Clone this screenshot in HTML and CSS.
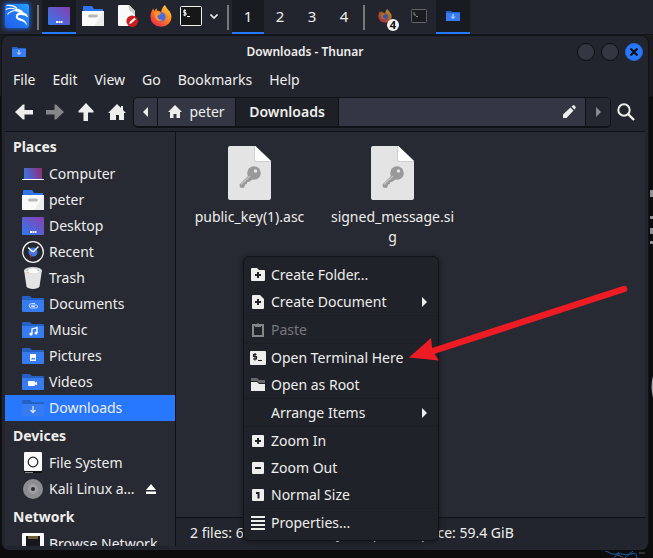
FILE: index.html
```html
<!DOCTYPE html>
<html lang="en">
<head>
<meta charset="utf-8">
<title>Downloads - Thunar</title>
<link rel="stylesheet" href="styles.css">
</head>
<body>
<svg class="defs" width="0" height="0" aria-hidden="true">
  <defs>
    <linearGradient id="g-screen" x1="0" y1="1" x2="1" y2="0"><stop offset="0" stop-color="#2e7bf0"/><stop offset="1" stop-color="#8a3fae"/></linearGradient>
    <linearGradient id="g-laptop" x1="0" y1="0.6" x2="1" y2="0.4"><stop offset="0" stop-color="#3b74e0"/><stop offset="1" stop-color="#8d2f7c"/></linearGradient>
    <linearGradient id="g-kali" x1="0" y1="1" x2="1" y2="0"><stop offset="0" stop-color="#1f5fe6"/><stop offset="0.5" stop-color="#2277f5"/><stop offset="1" stop-color="#2aa0ff"/></linearGradient>
    <linearGradient id="g-fox" x1="1" y1="0" x2="0.2" y2="1"><stop offset="0" stop-color="#ffe14a"/><stop offset="0.45" stop-color="#ff8a1f"/><stop offset="1" stop-color="#f0264f"/></linearGradient>
    <symbol id="folder" viewBox="0 0 22 16">
      <path d="M1 0h7l2 2h11a1 1 0 0 1 1 1v5H0V1a1 1 0 0 1 1-1z" fill="#2560c4"/>
      <path d="M0 4h22v11a1 1 0 0 1-1 1H1a1 1 0 0 1-1-1z" fill="#367bf0"/>
    </symbol>
    <symbol id="home-folder" viewBox="0 0 22 20">
      <path d="M1 1a1 1 0 0 1 1-1h8l2 3h9v4H1z" fill="#2f74ee"/>
      <path d="M0 5h22v15H0z" fill="#fafafa"/>
      <path d="M22 5v15H12z" fill="#ececec"/>
      <rect x="6" y="8.500" width="10" height="3" rx="1.500" fill="#b9b9b9"/>
    </symbol>
    <symbol id="desktop" viewBox="0 0 22 18">
      <rect width="22" height="18" rx="1" fill="url(#g-screen)"/>
      <path d="M8 14h2v2H8zM10.500 14h2v2h-2zM13 14h1.500v2H13z" fill="#fff"/>
    </symbol>
    <symbol id="firefox" viewBox="0 0 22 22">
      <path d="M15 0c1 1.500 1.500 3 3 4.500 2.500 2.500 3.500 5 3.500 7.500A10.500 9.800 0 0 1 .5 12C.5 8.500 1.500 6 3.200 3.500L4.500 6l2-3 .6 2.600c1.500.1 2.800.6 3.900 1.400.6-3 2-5.500 4-7z" fill="url(#g-fox)"/>
      <circle cx="11" cy="12" r="4.700" fill="#4a6be0"/>
      <path d="M4 7.500c3-1.500 5-.5 7 .5-.5 2-2.500 2-3.500 2.500-.5 3 2 5 5 4-2 3-7 1.500-7.500-2.500-.2-2-1.500-2.500-1-4.500z" fill="#ff9328"/>
    </symbol>
    <symbol id="key-file" viewBox="0 0 43 54">
      <path d="M2 0h25.500L43 15v37a2 2 0 0 1-2 2H2a2 2 0 0 1-2-2V2a2 2 0 0 1 2-2z" fill="#e4e4e4"/>
      <path d="M27 0v13a2 2 0 0 0 2 2h14v1H28.500A2.500 2.500 0 0 1 26 13.500V0z" fill="#cfcfcf"/>
      <path d="M27 0l16 15H29a2 2 0 0 1-2-2z" fill="#fff"/>
      <circle cx="26" cy="27" r="6.800" fill="#999"/>
      <path d="M21 29l-9.500 9.500.5 3 3.500.5 1.500-2-.3-1.500 2-.3.500-2 2-.5L25 33z" fill="#999"/>
      <path d="M13 38.500l9-8.500" stroke="#c4c4c4" stroke-width="1.200"/>
      <circle cx="27.500" cy="25" r="1.700" fill="#e4e4e4"/>
    </symbol>
    <symbol id="house" viewBox="0 0 18 16">
      <path d="M9 0l4 4V2h2v4l3 3h-2v7h-5v-5H8v5H2V9H0z" fill="#eeeeec"/>
    </symbol>
  </defs>
</svg>

<div class="desktop">
  <nav class="panel" aria-label="Panel">
    <button class="launcher kali" aria-label="Applications"><svg width="24" height="24" viewBox="0 0 24 24">
      <rect width="24" height="24" rx="1" fill="url(#g-kali)"/>
      <path d="M1.500 1.500c4-.500 8 .500 10.500 3M.800 5.500C5 3.500 9 4 12.500 6.500M2.500 10.500c2-2.800 5-4 9-4" fill="none" stroke="#fff" stroke-width="1.200"/>
      <path d="M11 4.500c4 .500 6.500 2 7.500 4l3 1.500 2 3.500-4-2c-3-.700-6-.800-6.500.700-.300 1.700 2.200 2 4.700 3 3 1.300 4.300 3.500 4.300 6.800-1.300-3-3-4.300-5.500-5-3-.800-5.700-1.500-5.700-4.500 0-2 1.200-3.200 3.200-4-1-.700-2-1-3.500-1.200z" fill="#fff"/>
    </svg></button>
    <i class="divider"></i>
    <button class="launcher active" aria-label="Show desktop"><svg width="22" height="18"><use href="#desktop"/></svg></button>
    <button class="launcher" aria-label="Files"><svg width="22" height="20"><use href="#home-folder"/></svg></button>
    <button class="launcher" aria-label="Text editor"><svg width="22" height="22" viewBox="0 0 22 22">
      <path d="M3 0h10l6 6v15H3a1 1 0 0 1-1-1V1a1 1 0 0 1 1-1z" fill="#fafafa"/><path d="M13 0l6 6v4l-6-5z" fill="#cfcfcf"/>
      <circle cx="16.200" cy="16.200" r="5.800" fill="#d01c1c"/><path d="M13.200 19.200l.7-2.500 4.500-4 1.500 1.500-4.500 4z" fill="#fff"/>
    </svg></button>
    <button class="launcher" aria-label="Firefox"><svg width="22" height="22"><use href="#firefox"/></svg></button>
    <button class="launcher narrow" aria-label="Terminal"><svg width="22" height="20" viewBox="0 0 22 20">
      <rect x=".500" y=".500" width="21" height="19" rx="1" fill="#171717" stroke="#f2f2f2"/>
      <path d="M6 4.500H3.800v2.200H6V9H3.300M4.800 3.200v7M7 10.500h3" fill="none" stroke="#fff"/>
    </svg></button>
    <button class="launcher arrow" aria-label="More terminals"><svg width="8" height="5" viewBox="0 0 8 5"><path d="M.500.500L4 4 7.500.500" fill="none" stroke="#eee" stroke-width="1.600"/></svg></button>
    <i class="divider"></i>
    <button class="workspace active">1</button>
    <button class="workspace">2</button>
    <button class="workspace">3</button>
    <button class="workspace">4</button>
    <i class="divider"></i>
    <button class="launcher task" aria-label="Firefox windows"><svg class="dim" width="14" height="14" viewBox="0 0 22 22"><use href="#firefox"/></svg><span class="count">4</span></button>
    <button class="launcher task" aria-label="Terminal window"><svg width="16" height="14" viewBox="0 0 16 14"><rect x=".500" y=".500" width="15" height="13" rx="1" fill="#1b1c20" stroke="#636468"/><path d="M3 3v3h2M5 7.500h2" fill="none" stroke="#8b8b8e"/></svg></button>
    <button class="launcher task active" aria-label="Downloads window"><svg width="14" height="10" viewBox="0 0 14 10"><path d="M0 0h5l1 1h8v9H0z" fill="#2560c4"/><path d="M0 2h14v8H0z" fill="#367bf0"/><path d="M7 3v4M5 5.500L7 7.500l2-2" fill="none" stroke="#dce8ff"/></svg></button>
  </nav>

  <div class="window">
    <header class="titlebar">
      <svg class="app" width="14" height="10" viewBox="0 0 14 10"><path d="M0 0h5l1 1h8v9H0z" fill="#2560c4"/><path d="M0 2h14v8H0z" fill="#367bf0"/><path d="M7 3v4M5 5.500L7 7.500l2-2" fill="none" stroke="#dce8ff"/></svg>
      <h1>Downloads - Thunar</h1>
      <div class="controls">
        <button aria-label="Minimize"></button>
        <button aria-label="Maximize"></button>
        <button class="close" aria-label="Close"><svg width="8" height="8" viewBox="0 0 8 8"><path d="M.500.500l7 7M7.500.500l-7 7" stroke="#111" stroke-width="2.200"/></svg></button>
      </div>
    </header>
    <nav class="menubar" aria-label="Menu bar">
      <button>File</button><button>Edit</button><button>View</button><button>Go</button><button>Bookmarks</button><button>Help</button>
    </nav>
    <div class="toolbar">
      <button class="tool" aria-label="Back"><svg width="18" height="16" viewBox="0 0 18 16"><path d="M0 8l8-7.500h1.500V6H18v4.500H9.500v5H8z" fill="#eeeeec"/></svg></button>
      <button class="tool" aria-label="Forward"><svg width="18" height="16" viewBox="0 0 18 16"><path d="M18 8l-8-7.500H8.500V6H0v4.500h8.500v5H10z" fill="#858688"/></svg></button>
      <button class="tool" aria-label="Up"><svg width="16" height="18" viewBox="0 0 16 18"><path d="M8 0l7.500 8v1.500H10V18H5.500V9.500H.500V8z" fill="#eeeeec"/></svg></button>
      <button class="tool" aria-label="Home"><svg width="18" height="16"><use href="#house"/></svg></button>
      <div class="pathbar">
        <button class="step" aria-label="Scroll path left"><svg width="5" height="10" viewBox="0 0 5 10"><path d="M5 0v10L0 5z" fill="#eeeeec"/></svg></button>
        <button class="crumb"><svg width="14" height="13" viewBox="0 0 14 13"><path d="M7 0l7 7h-2v6H8.500V9h-3v4H2V7H0z" fill="#eeeeec"/></svg>peter</button>
        <button class="crumb current">Downloads</button>
        <button class="edit" aria-label="Edit path"><svg width="13" height="13" viewBox="0 0 13 13"><path d="M0 13v-3.500L7.500 2.500l3 3L3.500 13zM8.500 1.500L10 .300h1.200L12.700 2v1L11.500 4.500z" fill="#eeeeec"/></svg></button>
        <button class="step off" aria-label="Scroll path right"><svg width="5" height="10" viewBox="0 0 5 10"><path d="M0 0v10l5-5z" fill="#8b8c90"/></svg></button>
      </div>
      <button class="search" aria-label="Search"><svg width="18" height="18" viewBox="0 0 18 18"><circle cx="7" cy="7" r="5.700" fill="none" stroke="#eeeeec" stroke-width="2"/><path d="M11 11l6 6" stroke="#eeeeec" stroke-width="2.400"/></svg></button>
    </div>

    <div class="content">
      <aside class="sidebar">
        <h2>Places</h2>
        <a href="#"><span class="ico"><svg width="22" height="12" viewBox="0 0 22 12"><rect x="2" width="18" height="11" fill="url(#g-laptop)"/><path d="M0 11h22v1H0z" fill="#fff"/></svg></span>Computer</a>
        <a href="#"><span class="ico"><svg width="22" height="20"><use href="#home-folder"/></svg></span>peter</a>
        <a href="#"><span class="ico"><svg width="22" height="18"><use href="#desktop"/></svg></span>Desktop</a>
        <a href="#"><span class="ico"><svg width="22" height="22" viewBox="0 0 22 22"><circle cx="11" cy="11" r="10.300" fill="#25272f" stroke="#f2f2f2" stroke-width="1.300"/><circle cx="11" cy="11" r="4.500" fill="#367bf0"/><path d="M6 6.500l5 4.500 5.500-5.500" fill="none" stroke="#fff" stroke-width="1.400"/><path d="M11 11l-3 6" stroke="#d0243a"/></svg></span>Recent</a>
        <a href="#"><span class="ico"><svg width="18" height="22" viewBox="0 0 18 22"><path d="M0 3h18l-2.500 16.500C15 21 12 22 9 22s-6-1-6.500-2.500z" fill="#e4e4e4"/><ellipse cx="9" cy="3.500" rx="9" ry="3.500" fill="#d4d4d4"/><ellipse cx="9" cy="4" rx="7.500" ry="2.500" fill="#fbfbfb"/><path d="M2.500 3.500l2-.8M13.500 3l2 .8" stroke="#5abfa5"/><path d="M3 5l2 .5" stroke="#e6c34a"/></svg></span>Trash</a>
        <a href="#"><span class="ico"><svg width="22" height="16"><use href="#folder"/><path d="M13 7.500H9.500a2 2 0 0 0 0 4.500h4a1.500 1.500 0 0 0 1-3l-5 .3c-.8.200-.6 1.200 0 1.200H13" fill="none" stroke="#c8dcff"/></svg></span>Documents</a>
        <a href="#"><span class="ico"><svg width="22" height="16"><use href="#folder"/><path d="M10 12V7l5-1.500V11" fill="none" stroke="#fff" stroke-width="1.300"/><circle cx="9" cy="12" r="1.600" fill="#fff"/><circle cx="14" cy="11" r="1.500" fill="#fff"/></svg></span>Music</a>
        <a href="#"><span class="ico"><svg width="22" height="16"><use href="#folder"/><rect x="8" y="6" width="6" height="7" fill="#fff"/><path d="M8.800 11.500l1.700-2 1 1 1-1 1 2z" fill="#367bf0"/></svg></span>Pictures</a>
        <a href="#"><span class="ico"><svg width="22" height="16"><use href="#folder"/><rect x="6" y="7" width="7" height="5" rx="1" fill="#fff"/><path d="M12 9.500l3-2v4z" fill="#fff"/></svg></span>Videos</a>
        <a href="#" class="selected" aria-current="page"><span class="ico"><svg width="22" height="16"><use href="#folder"/><path d="M11 6v6M8.500 10l2.500 2.500 2.500-2.500" fill="none" stroke="#d5e4ff" stroke-width="1.300"/></svg></span>Downloads</a>
        <h2>Devices</h2>
        <a href="#"><span class="ico"><svg width="18" height="22" viewBox="0 0 18 22"><rect y="17" width="18" height="4" rx="1" fill="#111"/><rect width="18" height="19" rx="1" fill="#fafafa"/><circle cx="9" cy="10" r="4.800" fill="none" stroke="#222" stroke-width="1.200"/><path d="M1 20.500h8" stroke="#888"/></svg></span>File System</a>
        <a href="#"><span class="ico"><svg width="20" height="20" viewBox="0 0 20 20"><circle cx="10" cy="10" r="10" fill="#8d8d91"/><circle cx="10" cy="10" r="5" fill="#a0a0a4"/><circle cx="10" cy="10" r="2" fill="#2a2c36"/></svg></span><span class="name">Kali Linux a…</span><svg class="eject" width="10" height="10" viewBox="0 0 10 10"><path d="M5 0l5 6H0zM0 7.500h10V10H0z" fill="#fff"/></svg></a>
        <h2>Network</h2>
        <a href="#"><span class="ico"><svg width="22" height="22" viewBox="0 0 22 22"><rect width="22" height="22" rx="1" fill="#fafafa"/><path d="M4 3h14v16H4z" fill="#16171c"/><path d="M7 3v3M9 3v3M11 3v3M13 3v3M15 3v3" stroke="#c3a54f"/></svg></span>Browse Network</a>
      </aside>

      <main class="pane">
        <div class="files">
          <figure><svg width="43" height="54"><use href="#key-file"/></svg><figcaption>public_key(1).asc</figcaption></figure>
          <figure><svg width="43" height="54"><use href="#key-file"/></svg><figcaption>signed_message.sig</figcaption></figure>
        </div>
        <footer class="status">2 files: 6.0 KiB (6,141 bytes) | Free space: 59.4 GiB</footer>
      </main>
    </div>
  </div>

  <div class="context" role="menu">
    <button role="menuitem"><span class="mico"><svg width="14" height="13" viewBox="0 0 14 13"><path d="M0 1a1 1 0 0 1 1-1h5l2 2h5a1 1 0 0 1 1 1v9a1 1 0 0 1-1 1H1a1 1 0 0 1-1-1z" fill="#eeeeec"/><path d="M7 4v6M4 7h6" stroke="#20222a" stroke-width="2"/></svg></span>Create Folder...</button>
    <button role="menuitem"><span class="mico"><svg width="12" height="14" viewBox="0 0 12 14"><path d="M0 1a1 1 0 0 1 1-1h7l4 4v9a1 1 0 0 1-1 1H1a1 1 0 0 1-1-1z" fill="#eeeeec"/><path d="M6 4v6M3 7h6" stroke="#20222a" stroke-width="2"/></svg></span>Create Document<svg class="sub" width="5" height="10" viewBox="0 0 5 10"><path d="M0 0v10l5-5z" fill="#eeeeec"/></svg></button>
    <hr>
    <button role="menuitem" disabled><span class="mico"><svg width="12" height="14" viewBox="0 0 12 14"><path d="M1 2h10v11H1z" fill="none" stroke="#858689" stroke-width="2"/><path d="M3 1h2l1-1 1 1h2v3H3z" fill="#858689"/></svg></span>Paste</button>
    <hr>
    <button role="menuitem"><span class="mico"><svg width="16" height="14" viewBox="0 0 16 14"><rect width="16" height="14" rx="1" fill="#eeeeec"/><path d="M6.500 3.500H3.500v2h3v2.500H3M5 2v7.500M8 9.500h4" fill="none" stroke="#20222a" stroke-width="1.200"/></svg></span>Open Terminal Here</button>
    <button role="menuitem"><span class="mico"><svg width="14" height="13" viewBox="0 0 14 13"><path d="M0 0h6l2 2h6v3H8L6 3H0z" fill="#66676b"/><path d="M0 4h6l2 2h6v7H0z" fill="#eeeeec"/></svg></span>Open as Root</button>
    <hr>
    <button role="menuitem"><span class="mico"></span>Arrange Items<svg class="sub" width="5" height="10" viewBox="0 0 5 10"><path d="M0 0v10l5-5z" fill="#eeeeec"/></svg></button>
    <hr>
    <button role="menuitem"><span class="mico"><svg width="12" height="12" viewBox="0 0 12 12"><rect width="12" height="12" rx="1" fill="#eeeeec"/><path d="M6 3v6M3 6h6" stroke="#20222a" stroke-width="2"/></svg></span>Zoom In</button>
    <button role="menuitem"><span class="mico"><svg width="12" height="12" viewBox="0 0 12 12"><rect width="12" height="12" rx="1" fill="#eeeeec"/><path d="M3 6h6" stroke="#20222a" stroke-width="2"/></svg></span>Zoom Out</button>
    <button role="menuitem"><span class="mico"><svg width="12" height="12" viewBox="0 0 12 12"><rect width="12" height="12" rx="1" fill="#eeeeec"/><path d="M4 4h2.500v5.500" fill="none" stroke="#20222a" stroke-width="2"/></svg></span>Normal Size</button>
    <hr>
    <button role="menuitem"><span class="mico"><svg width="14" height="14" viewBox="0 0 14 14"><path d="M0 1h14M0 5h14M0 9h14M0 13h14" stroke="#eeeeec" stroke-width="2"/></svg></span>Properties...</button>
  </div>

  <svg class="pointer" width="220" height="78" viewBox="0 0 220 78" aria-hidden="true">
    <path d="M24 66L215 4" stroke="#ed1c24" stroke-width="6.500" stroke-linecap="round"/>
    <path d="M0 72.500L22 53l1.500 13L30 75.500z" fill="#ed1c24"/>
  </svg>
  <svg class="edge" width="3" height="480" viewBox="0 0 3 480" aria-hidden="true">
    <path d="M0 112h3v7H0zM0 138h3v3H0zM0 150h3v6H0zM0 163h3v3H0z" fill="#8f9093"/>
    <path d="M3 298q-3 10 0 22z" fill="#a5a6a9"/>
  </svg>
  <svg class="wall" width="60" height="7" viewBox="0 0 60 7" aria-hidden="true">
    <path d="M12 0c5 1 6 4 12 3s8 2 14 0 5 1 6 4M26 1l-5 6M32 7c3-4 6-5 8-7" fill="none" stroke="#1763b8"/>
    <path d="M24 4l6 2M46 2h6" stroke="#555"/>
  </svg>
</div>
</body>
</html>
```
FILE: styles.css
```css
* { box-sizing: border-box; }

body {
  margin: 0;
  background: #0b0b0c;
  color: #eeeeec;
  font: 14px/20px "Noto Sans", "Open Sans", sans-serif;
}

button {
  margin: 0;
  padding: 0;
  border: 0;
  background: none;
  color: inherit;
  font: inherit;
}

svg { display: block; flex: none; }
.defs { position: absolute; }

.desktop {
  position: relative;
  display: flex;
  flex-direction: column;
  height: 100vh;
  overflow: hidden;
  background: linear-gradient(#1b1c20 96px, #0c0c0d 97px);
}

/* Top panel */
.panel {
  display: flex;
  flex: none;
  height: 35px;
  background: #23252e;
  border-bottom: 1px solid #15161a;
}

.launcher,
.workspace {
  position: relative;
  display: flex;
  align-items: center;
  justify-content: center;
  width: 34px;
  border-bottom: 2px solid transparent;
}
.workspace { width: 32px; font-size: 15px; }
.narrow { width: 26px; }
.arrow { width: 20px; }
.kali svg { border-radius: 2px; box-shadow: 0 0 4px 1px #1e5fd0; }
.panel .active { background: #191b23; border-bottom-color: #2777ff; }

.divider {
  width: 2px;
  height: 25px;
  margin: 5px 3px;
  background: #77787c;
}

.dim { opacity: 0.65; }
.count {
  position: absolute;
  right: 3px;
  bottom: 1px;
  width: 12px;
  height: 12px;
  border-radius: 50%;
  background: #f2f2f2;
  color: #111;
  font-size: 11px;
  font-weight: 700;
  line-height: 12px;
}

/* File manager window */
.window {
  display: flex;
  flex: 1;
  flex-direction: column;
  min-height: 0;
  margin: 0 4px 8px 1px;
  padding: 0 3px 4px;
  border: 1px solid #121318;
  border-bottom: 0;
  border-radius: 8px;
  background: #23252e;
}

.titlebar {
  display: grid;
  grid-template-columns: 32px 1fr 72px;
  align-items: center;
  flex: none;
  height: 31px;
}
.app { margin-left: 7px; }
.titlebar h1 {
  margin: 0;
  font-size: 12px;
  font-weight: 600;
  text-align: center;
}
.controls { display: flex; gap: 6px; justify-content: flex-end; padding-right: 2px; }
.controls button {
  display: grid;
  place-items: center;
  width: 18px;
  height: 18px;
  border: 1px solid #0c0d10;
  border-radius: 50%;
  background: #343742;
}
.controls .close { border-color: #2468dc; background: #2777ff; }

.menubar {
  display: flex;
  flex: none;
  gap: 17px;
  height: 26px;
  padding-left: 8px;
}

.toolbar {
  display: flex;
  align-items: center;
  flex: none;
  height: 39px;
  border-bottom: 1px solid #101116;
  padding: 0 4px 0 3px;
}
.tool { display: grid; place-items: center; width: 31px; height: 30px; }
.search { display: grid; place-items: center; width: 30px; height: 30px; }

.pathbar {
  display: flex;
  flex: 1;
  height: 31px;
  margin-left: 1px;
  border: 1px solid #111217;
  border-bottom-width: 2px;
  border-radius: 5px;
  background: #343743;
}
.pathbar button { border-right: 1px solid #111217; }
.pathbar .step { display: grid; place-items: center; width: 24px; }
.pathbar .off { border-right: 0; background: #262831; border-radius: 0 4px 4px 0; }
.crumb {
  display: flex;
  gap: 7px;
  align-items: center;
  justify-content: center;
  width: 78px;
}
.pathbar .current { width: 103px; background: #1e2027; font-weight: 600; }
.edit { display: flex; align-items: center; justify-content: flex-end; flex: 1; padding-right: 9px; }

.content { display: flex; flex: 1; min-height: 0; }

.sidebar {
  flex: none;
  width: 171px;
  overflow: hidden;
  border-right: 1px solid #101116;
  background: #272933;
}
.sidebar h2 {
  margin: 0;
  padding-left: 8px;
  font-size: 14px;
  font-weight: 700;
  line-height: 29px;
}
.sidebar a {
  display: flex;
  align-items: center;
  height: 26px;
  padding-left: 16px;
  color: inherit;
  text-decoration: none;
  white-space: nowrap;
}
.sidebar .selected { background: #2777ff; }
.ico { display: grid; place-items: center; width: 24px; margin-right: 4px; }
.name { width: 97px; }

.pane { display: flex; flex: 1; flex-direction: column; min-width: 0; background: #272933; }
.files {
  display: grid;
  grid-template-columns: repeat(auto-fill, 127px);
  gap: 16px;
  align-content: start;
  flex: 1;
  padding: 14px 10px;
}
figure { display: flex; flex-direction: column; align-items: center; gap: 7px; margin: 0; }
figcaption { width: 100%; text-align: center; word-break: break-all; }
.status {
  flex: none;
  height: 29px;
  border-top: 1px solid #101116;
  padding-left: 14px;
  background: #23252e;
  line-height: 30px;
  white-space: nowrap;
}

/* Context menu */
.context {
  position: absolute;
  left: 243px;
  top: 256px;
  width: 196px;
  padding: 4px 0;
  border: 1px solid #13141a;
  border-radius: 6px;
  background: #20222a;
  box-shadow: 0 1px 6px rgba(0, 0, 0, 0.4);
}
.context button {
  display: flex;
  align-items: center;
  width: 100%;
  height: 27px;
  padding: 0 11px 0 6px;
}
.context button:disabled { color: #77787c; }
.context hr { height: 1px; margin: 0; border: 0; background: #1c1e25; }
.mico { display: grid; place-items: center; width: 16px; margin-right: 5px; }
.sub { margin-left: auto; }

/* Overlays on the desktop */
.pointer { position: absolute; left: 409px; top: 285px; }
.edge { position: absolute; right: 0; top: 78px; }
.wall { position: absolute; right: 0; bottom: 0; }
```
